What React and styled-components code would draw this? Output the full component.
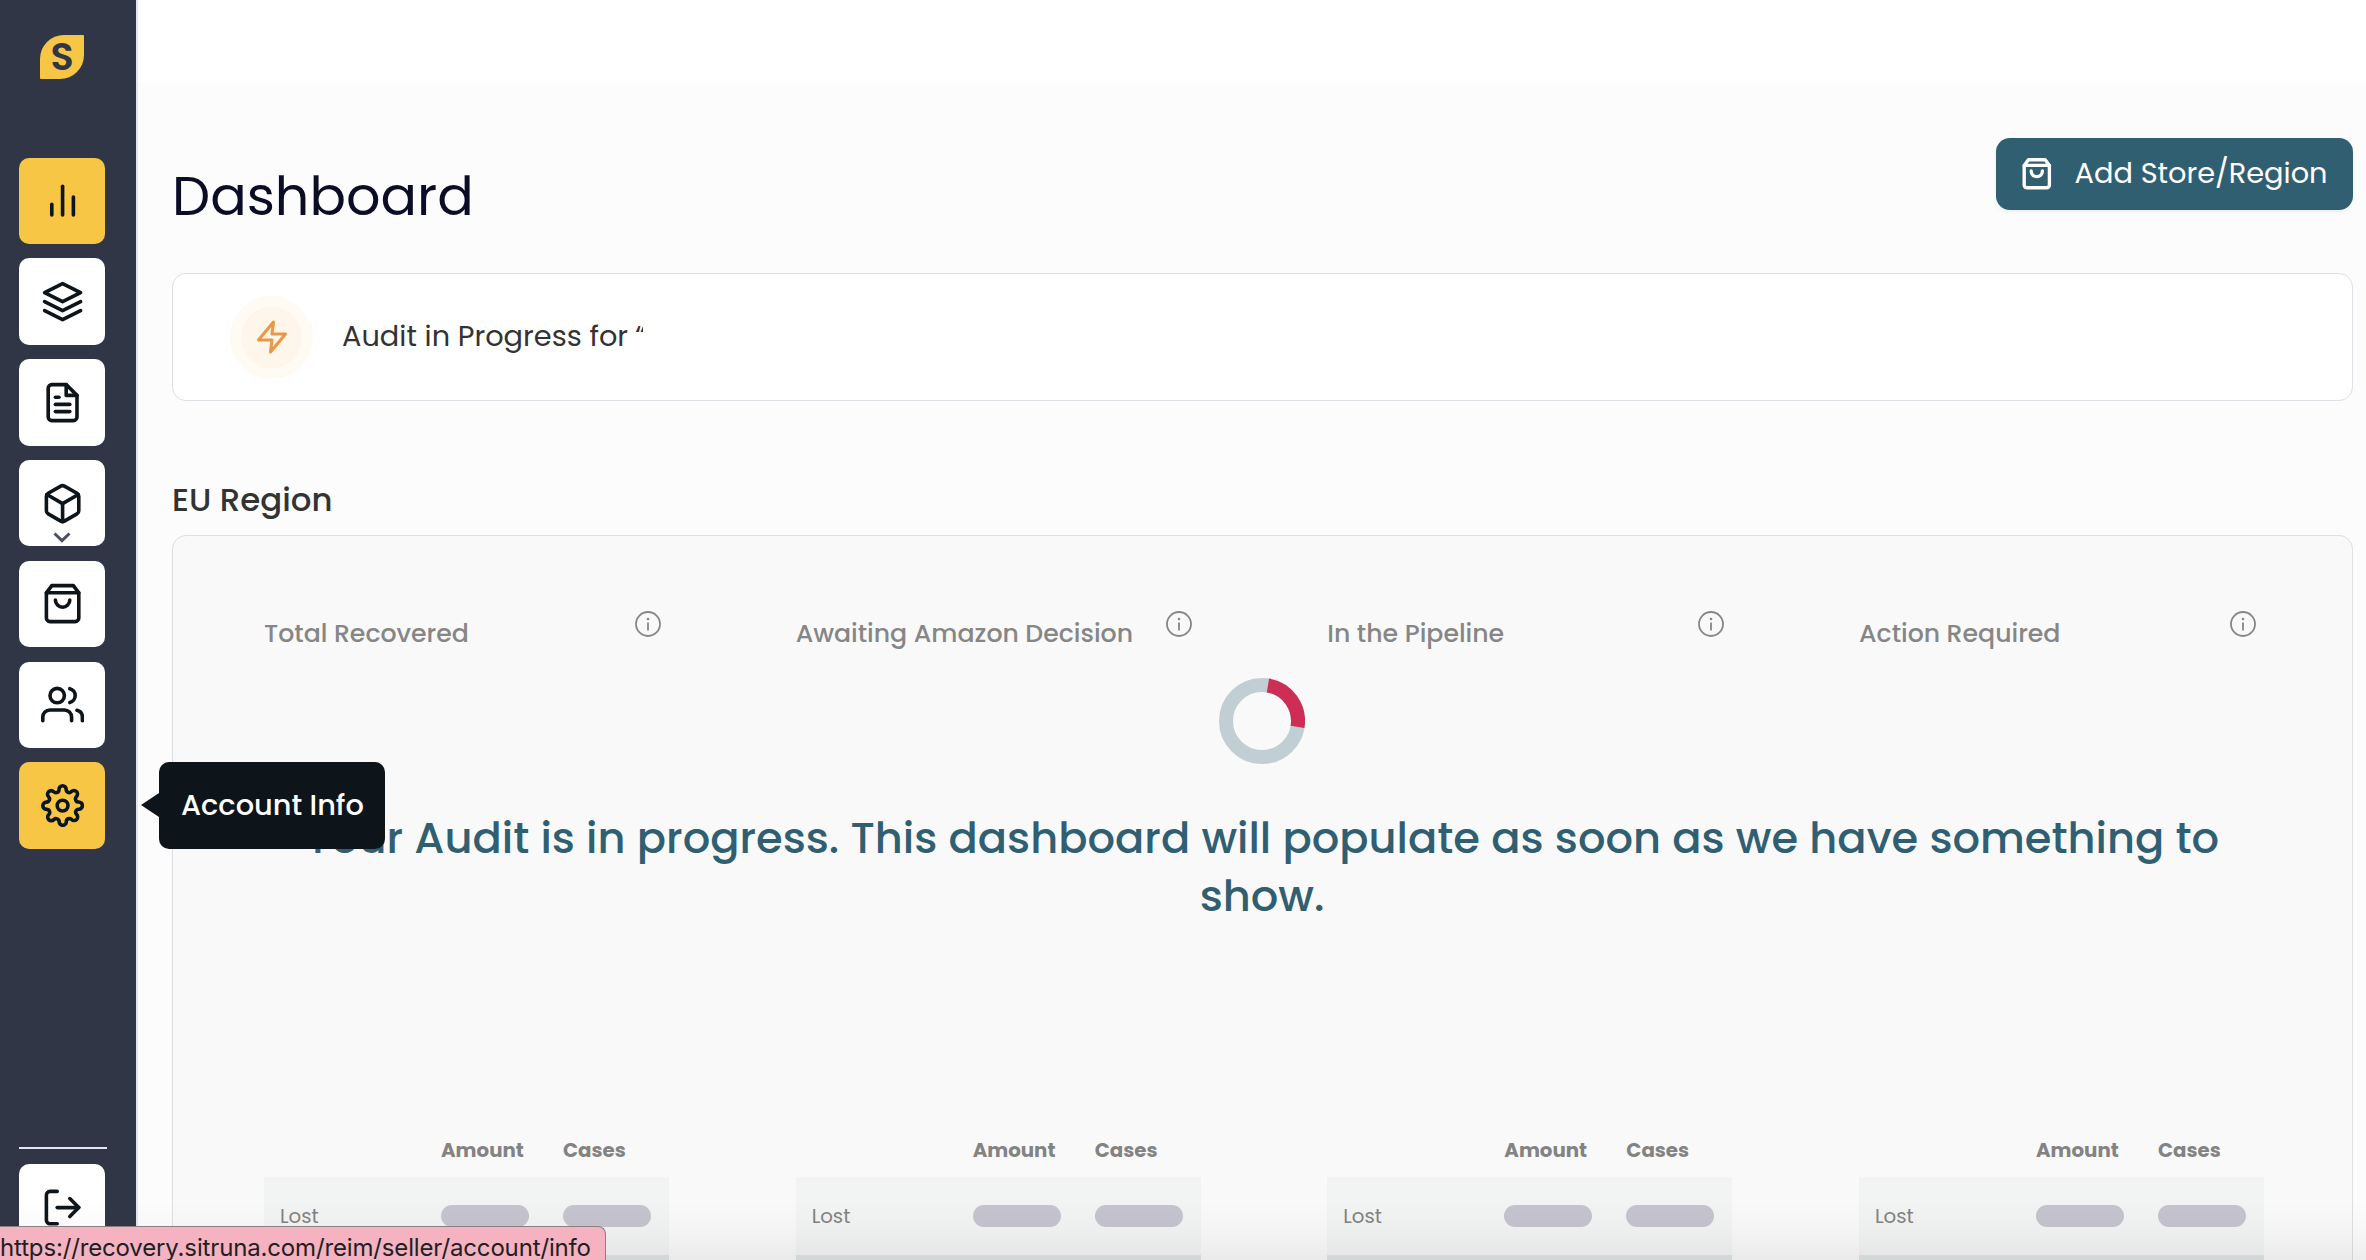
import { memo } from 'react';
import styled, { createGlobalStyle } from 'styled-components';
import {
  FiBarChart2,
  FiBox,
  FiFileText,
  FiLayers,
  FiLogOut,
  FiSettings,
  FiShoppingBag,
  FiUsers,
  FiZap,
} from 'react-icons/fi';

const GlobalStyle = createGlobalStyle`
  * {
    box-sizing: border-box;
  }

  body {
    margin: 0;
    overflow: hidden;
    background: #fcfcfc;
    font-family: Poppins, Inter, 'Liberation Sans', sans-serif;
    font-feature-settings: 'cv11' 1;
    color: #333333;
  }
`;

const Page = styled.div`
  display: flex;
  position: relative;
  height: 1260px;
  overflow: hidden;
`;

const Sidebar = styled.nav`
  display: flex;
  flex-direction: column;
  flex-shrink: 0;
  width: 138px;
  padding: 35px 0 9.6px 19px;
  background: #303646;
  border-right: 2px solid #e3e6f0;
`;

const Logo = styled.div`
  display: flex;
  align-items: center;
  justify-content: center;
  width: 44px;
  height: 44px;
  margin: 0 0 78.6px 21px;
  background: #f7c644;
  border-radius: 24px 1px 24px 1px;
  font-weight: 600;
  font-size: 38px;
  line-height: 44px;
  color: #303646;
`;

const NavList = styled.div`
  display: flex;
  flex-direction: column;
  gap: 14.4px;
`;

const NavButton = styled.div`
  display: flex;
  align-items: center;
  justify-content: center;
  position: relative;
  width: 86.4px;
  height: 86.4px;
  background: ${({ $active }) => ($active ? '#f7c644' : '#ffffff')};
  border-radius: 10px;
  color: #0d151b;

  > svg {
    width: 43.2px;
    height: 43.2px;
  }
`;

const Chevron = styled.span`
  display: flex;
  position: absolute;
  left: 34px;
  bottom: 3px;
`;

const Tooltip = styled.div`
  position: absolute;
  top: 0;
  left: 140px;
  z-index: 3;
  width: 226px;
  height: 86.4px;
  padding-left: 22px;
  background: #0d151b;
  border-radius: 10px;
  font-weight: 500;
  font-size: 28.8px;
  line-height: 86px;
  white-space: nowrap;
  color: #ffffff;

  &::before {
    content: '';
    position: absolute;
    top: 31px;
    left: -18px;
    border: solid transparent;
    border-width: 12px 18px 12px 0;
    border-right-color: #0d151b;
  }
`;

const SidebarFooter = styled.div`
  margin-top: auto;
`;

const Divider = styled.div`
  width: 88px;
  height: 2px;
  margin-bottom: 15px;
  background: #e3e6f0;
`;

const Main = styled.main`
  flex: 1;
  min-width: 0;
`;

const TopBar = styled.header`
  height: 82px;
  background: #ffffff;
`;

const Content = styled.div`
  padding: 56px 13px 0 34px;
`;

const TitleRow = styled.div`
  display: flex;
  align-items: flex-start;
  justify-content: space-between;
  height: 135px;
`;

const Title = styled.h1`
  margin: 26px 0 0;
  font-weight: 400;
  font-size: 54px;
  line-height: 64px;
  color: #0b0d26;
`;

const AddButton = styled.button`
  display: flex;
  align-items: center;
  width: 357px;
  height: 72px;
  padding: 0 0 2px 24px;
  background: #315f72;
  border: none;
  border-radius: 14px;
  box-shadow: 0 2px 4px rgba(16, 24, 40, 0.06);
  font-family: inherit;
  font-feature-settings: inherit;
  font-size: 28.8px;
  line-height: 70px;
  white-space: nowrap;
  color: #ffffff;

  svg {
    width: 33.6px;
    height: 33.6px;
    margin: 2px 21px 0 0;
    stroke-width: 2.4;
  }
`;

const AuditCard = styled.section`
  display: flex;
  align-items: center;
  height: 128px;
  padding-left: 57px;
  background: #ffffff;
  border: 1px solid #dedfe4;
  border-radius: 14px;
`;

const AuditBadge = styled.div`
  display: flex;
  align-items: center;
  justify-content: center;
  width: 83px;
  height: 83px;
  background: #fef5eb;
  border: 11px solid #fffaf3;
  border-radius: 50%;
  color: #ed9646;

  svg {
    width: 36px;
    height: 36px;
  }
`;

const AuditText = styled.div`
  display: flex;
  margin-left: 29px;
  padding-bottom: 2px;
  font-size: 28.8px;
  line-height: 40px;
  white-space: pre;
`;

const StoreName = styled.span`
  width: 8px;
  height: 16px;
  margin-left: 7px;
  overflow: hidden;
`;

const RegionTitle = styled.h2`
  margin: 75px 0 12px;
  font-weight: 500;
  font-size: 32.4px;
  line-height: 47px;
`;

const RegionPanel = styled.section`
  position: relative;
  height: 900px;
  padding: 75px 88px 0 91px;
  background: #f9f9f9;
  border: 1px solid #dedfe2;
  border-radius: 14px;
`;

const Columns = styled.div`
  display: flex;
  justify-content: space-between;
`;

const Column = styled.div`
  width: 405px;
`;

const ColumnHeader = styled.div`
  display: flex;
  align-items: flex-start;
  justify-content: space-between;
  height: 40px;
  margin-bottom: 484px;
  padding-right: 8.4px;
`;

const ColumnLabel = styled.h3`
  margin: 5px 0 0;
  font-weight: 500;
  font-size: 25.2px;
  line-height: 35px;
  white-space: nowrap;
  color: #868686;
`;

const TableRow = styled.div`
  display: grid;
  grid-template-columns: 161px 122px 88px;
  align-items: center;
  padding-left: 16px;
`;

const HeadRow = styled(TableRow)`
  margin-bottom: 12px;
  font-weight: 700;
  font-size: 19.8px;
  line-height: 30px;
  color: #838383;
`;

const BodyRow = styled(TableRow)`
  height: 78px;
  background: ${({ $dark }) => ($dark ? '#dfe4e5' : '#f2f4f4')};
  font-size: 19.8px;
  color: #828282;
`;

const Pill = styled.span`
  width: 88px;
  height: 22px;
  background: #c4c3ce;
  border-radius: 11px;
`;

const Overlay = styled.div`
  display: flex;
  flex-direction: column;
  align-items: center;
  position: absolute;
  inset: 0;
  padding: 142px 101px 0 100px;
`;

const Message = styled.p`
  margin: 45px 0 0;
  font-weight: 500;
  font-size: 43.2px;
  line-height: 58px;
  text-align: center;
  color: #315f72;
`;

const BottomFade = styled.div`
  position: absolute;
  left: 0;
  right: 0;
  bottom: 0;
  height: 60px;
  background: linear-gradient(rgba(0, 0, 0, 0), rgba(0, 0, 0, 0.02) 50%, rgba(0, 0, 0, 0.06));
`;

const StatusBar = styled.div`
  position: absolute;
  left: 0;
  bottom: 0;
  width: 606px;
  height: 34px;
  background: #f5b2c0;
  border: solid #8b7f86;
  border-width: 1px 1px 0 0;
  border-radius: 0 8px 0 0;
  font-family: Inter, sans-serif;
  font-feature-settings: normal;
  font-size: 24px;
  line-height: 41px;
  letter-spacing: -0.15px;
  white-space: nowrap;
  color: #202124;
`;

const InfoIcon = () => (
  <svg width="26" height="26" viewBox="0 0 26 26" fill="none" stroke="#868686">
    <circle cx="13" cy="13" r="12" strokeWidth="1.8" />
    <line x1="13" y1="11.5" x2="13" y2="19.5" strokeWidth="1.8" />
    <circle cx="13" cy="8" r="1.3" fill="#868686" stroke="none" />
  </svg>
);

const Spinner = () => (
  <svg width="86" height="86" viewBox="0 0 86 86" fill="none" strokeWidth="14">
    <circle cx="43" cy="43" r="36" stroke="#c1cfd4" />
    <circle
      cx="43"
      cy="43"
      r="36"
      stroke="#ce2d56"
      pathLength="360"
      strokeDasharray="90 270"
      transform="rotate(-80.5 43 43)"
    />
  </svg>
);

const navItems = [
  { id: 'dashboard', Icon: FiBarChart2, active: true },
  { id: 'cases', Icon: FiLayers },
  { id: 'reports', Icon: FiFileText },
  { id: 'inventory', Icon: FiBox, expandable: true },
  { id: 'stores', Icon: FiShoppingBag },
  { id: 'users', Icon: FiUsers },
  { id: 'account', Icon: FiSettings, active: true, tooltip: 'Account Info' },
];

const columns = ['Total Recovered', 'Awaiting Amazon Decision', 'In the Pipeline', 'Action Required'];

const SummaryColumn = ({ label }) => (
  <Column>
    <ColumnHeader>
      <ColumnLabel>{label}</ColumnLabel>
      <InfoIcon />
    </ColumnHeader>
    <HeadRow>
      <span />
      <span>Amount</span>
      <span>Cases</span>
    </HeadRow>
    <BodyRow>
      <span>Lost</span>
      <Pill />
      <Pill />
    </BodyRow>
    <BodyRow $dark />
  </Column>
);

const App = () => (
  <>
    <GlobalStyle />
    <Page>
      <Sidebar>
        <Logo>S</Logo>
        <NavList>
          {navItems.map(({ id, Icon, active, expandable, tooltip }) => (
            <NavButton key={id} $active={active}>
              <Icon />
              {expandable && (
                <Chevron>
                  <svg width="18" height="11" viewBox="0 0 18 11" fill="none" stroke="#4a4f66" strokeWidth="3">
                    <path d="M1.5 1.5L9 8.7L16.5 1.5" />
                  </svg>
                </Chevron>
              )}
              {tooltip && <Tooltip>{tooltip}</Tooltip>}
            </NavButton>
          ))}
        </NavList>
        <SidebarFooter>
          <Divider />
          <NavButton>
            <FiLogOut />
          </NavButton>
        </SidebarFooter>
      </Sidebar>

      <Main>
        <TopBar />
        <Content>
          <TitleRow>
            <Title>Dashboard</Title>
            <AddButton>
              <FiShoppingBag />
              Add Store/Region
            </AddButton>
          </TitleRow>

          <AuditCard>
            <AuditBadge>
              <FiZap />
            </AuditBadge>
            <AuditText>
              Audit in Progress for
              <StoreName>“</StoreName>
            </AuditText>
          </AuditCard>

          <RegionTitle>EU Region</RegionTitle>
          <RegionPanel>
            <Columns>
              {columns.map((label) => (
                <SummaryColumn key={label} label={label} />
              ))}
            </Columns>
            <Overlay>
              <Spinner />
              <Message>
                Your Audit is in progress. This dashboard will populate as soon as we have something to show.
              </Message>
            </Overlay>
          </RegionPanel>
        </Content>
      </Main>

      <BottomFade />
      <StatusBar>https://recovery.sitruna.com/reim/seller/account/info</StatusBar>
    </Page>
  </>
);

export default memo(App);
